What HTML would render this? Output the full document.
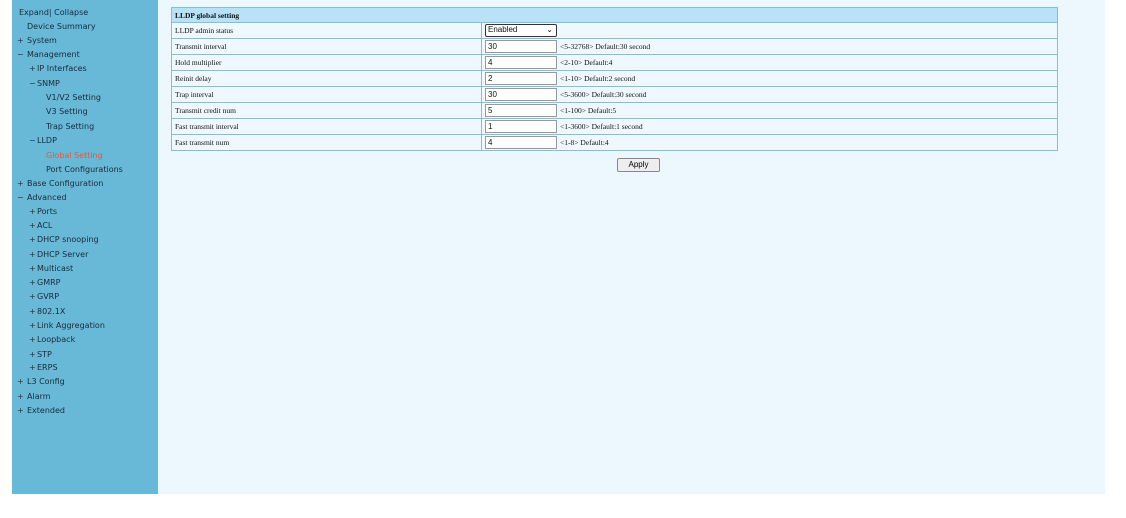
<!DOCTYPE html>
<html><head><meta charset="utf-8"><style>
body{margin:0;width:1126px;height:518px;background:#fff;position:relative;overflow:hidden}
#side{position:absolute;left:12px;top:0;width:146px;height:494px;background:#68b9d8}
#main{position:absolute;left:158px;top:0;width:947px;height:494px;background:#ecf7fe}
.it{position:absolute;font:8px "DejaVu Sans",sans-serif;color:#1a2a3a;white-space:nowrap;line-height:10px;margin-top:1px}
.ic{position:absolute;font:8px "DejaVu Sans",sans-serif;color:#333;line-height:10px;margin-top:1px}
table{position:absolute;left:171px;top:7px;width:887px;border-collapse:collapse;font:7.5px "Liberation Serif",serif;color:#111}
td{border:1px solid #7cc3d8;height:16px;padding:0 3px;box-sizing:border-box;background:#eef8fe}
th{background:#b9e2f8;border:1px solid #7cc3d8;text-align:left;font-weight:bold;height:15px;padding:0 3px;box-sizing:border-box}
.inp{display:inline-block;width:72px;height:13px;border:1px solid #999;background:#fff;font:8px "Liberation Sans",sans-serif;line-height:12px;padding-left:2px;box-sizing:border-box;vertical-align:middle}
.h{margin-left:3px;vertical-align:middle}
.sel{display:inline-block;width:68px;height:11px;border:1px solid #333;border-radius:2px;background:#fff;font:8px "Liberation Sans",sans-serif;line-height:10px;padding-left:2px;position:relative;vertical-align:middle}
.btn{position:absolute;left:617px;top:158px;width:41px;height:12px;border:1px solid #888;border-radius:2px;background:#eee;font:8px "Liberation Sans",sans-serif;text-align:center;line-height:12px}
</style></head><body>
<div id="side"></div>
<div id="main"></div>
<div class="it" style="left:19px;top:7px">Expand| Collapse</div>
<div class="it" style="left:27px;top:21px">Device Summary</div>
<div class="ic" style="left:17px;top:35px">+</div><div class="it" style="left:27px;top:35px">System</div>
<div class="ic" style="left:17px;top:49px">−</div><div class="it" style="left:27px;top:49px">Management</div>
<div class="ic" style="left:29px;top:63px">+</div><div class="it" style="left:37px;top:63px">IP Interfaces</div>
<div class="ic" style="left:29px;top:78px">−</div><div class="it" style="left:37px;top:78px">SNMP</div>
<div class="it" style="left:46px;top:92px">V1/V2 Setting</div>
<div class="it" style="left:46px;top:106px">V3 Setting</div>
<div class="it" style="left:46px;top:121px">Trap Setting</div>
<div class="ic" style="left:29px;top:135px">−</div><div class="it" style="left:37px;top:135px">LLDP</div>
<div class="it" style="left:46px;top:150px;color:#e05a3a">Global Setting</div>
<div class="it" style="left:46px;top:164px">Port Configurations</div>
<div class="ic" style="left:17px;top:178px">+</div><div class="it" style="left:27px;top:178px">Base Configuration</div>
<div class="ic" style="left:17px;top:192px">−</div><div class="it" style="left:27px;top:192px">Advanced</div>
<div class="ic" style="left:29px;top:206px">+</div><div class="it" style="left:37px;top:206px">Ports</div>
<div class="ic" style="left:29px;top:220px">+</div><div class="it" style="left:37px;top:220px">ACL</div>
<div class="ic" style="left:29px;top:234px">+</div><div class="it" style="left:37px;top:234px">DHCP snooping</div>
<div class="ic" style="left:29px;top:249px">+</div><div class="it" style="left:37px;top:249px">DHCP Server</div>
<div class="ic" style="left:29px;top:263px">+</div><div class="it" style="left:37px;top:263px">Multicast</div>
<div class="ic" style="left:29px;top:277px">+</div><div class="it" style="left:37px;top:277px">GMRP</div>
<div class="ic" style="left:29px;top:291px">+</div><div class="it" style="left:37px;top:291px">GVRP</div>
<div class="ic" style="left:29px;top:306px">+</div><div class="it" style="left:37px;top:306px">802.1X</div>
<div class="ic" style="left:29px;top:320px">+</div><div class="it" style="left:37px;top:320px">Link Aggregation</div>
<div class="ic" style="left:29px;top:334px">+</div><div class="it" style="left:37px;top:334px">Loopback</div>
<div class="ic" style="left:29px;top:349px">+</div><div class="it" style="left:37px;top:349px">STP</div>
<div class="ic" style="left:29px;top:362px">+</div><div class="it" style="left:37px;top:362px">ERPS</div>
<div class="ic" style="left:17px;top:376px">+</div><div class="it" style="left:27px;top:376px">L3 Config</div>
<div class="ic" style="left:17px;top:391px">+</div><div class="it" style="left:27px;top:391px">Alarm</div>
<div class="ic" style="left:17px;top:405px">+</div><div class="it" style="left:27px;top:405px">Extended</div>

<table>
<tr><th colspan="2">LLDP global setting</th></tr>
<tr><td style="width:310px">LLDP admin status</td><td><span class="sel">Enabled<span style="position:absolute;right:3px;top:0">⌄</span></span></td></tr>
<tr><td>Transmit interval</td><td><span class="inp">30</span><span class="h">&lt;5-32768&gt; Default:30 second</span></td></tr>
<tr><td>Hold multiplier</td><td><span class="inp">4</span><span class="h">&lt;2-10&gt; Default:4</span></td></tr>
<tr><td>Reinit delay</td><td><span class="inp">2</span><span class="h">&lt;1-10&gt; Default:2 second</span></td></tr>
<tr><td>Trap interval</td><td><span class="inp">30</span><span class="h">&lt;5-3600&gt; Default:30 second</span></td></tr>
<tr><td>Transmit credit num</td><td><span class="inp">5</span><span class="h">&lt;1-100&gt; Default:5</span></td></tr>
<tr><td>Fast transmit interval</td><td><span class="inp">1</span><span class="h">&lt;1-3600&gt; Default:1 second</span></td></tr>
<tr><td>Fast transmit num</td><td><span class="inp">4</span><span class="h">&lt;1-8&gt; Default:4</span></td></tr>
</table>
<div class="btn">Apply</div>
</body></html>
